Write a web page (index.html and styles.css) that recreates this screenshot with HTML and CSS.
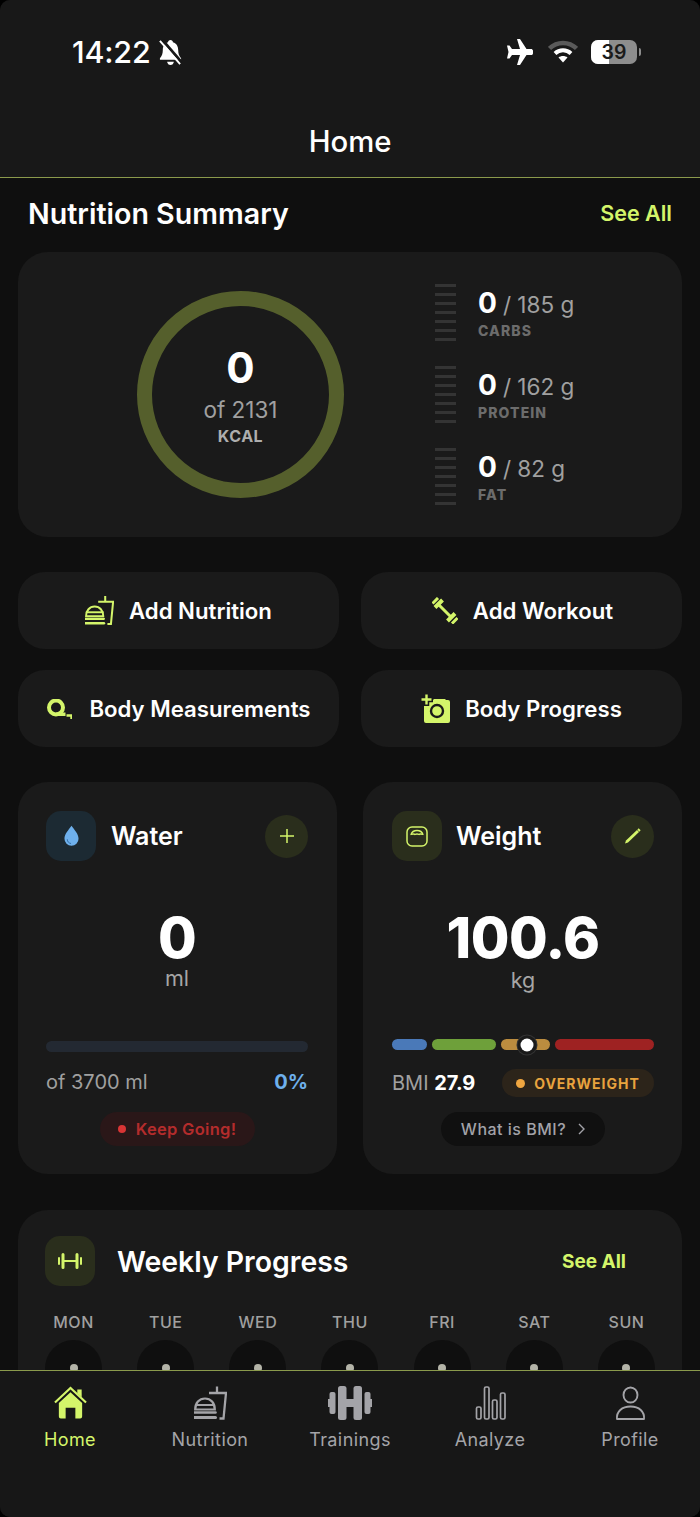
FILE: index.html
```html
<!DOCTYPE html>
<html lang="en">
<head>
<meta charset="utf-8">
<title>Home</title>
<link rel="stylesheet" href="styles.css">
</head>
<body>
<svg class="defs" aria-hidden="true">
  <symbol id="i-food" viewBox="0 0 33 33">
    <path d="M1.200 23c0-6.500 4-11 9.800-11s9.800 4.500 9.800 11z" fill="none" stroke="currentColor" stroke-width="2.200"/>
    <path d="M1 18.500h20" stroke="currentColor" stroke-width="2.200"/>
    <path d="M.5 26h21" stroke="currentColor" stroke-width="2.600" stroke-linecap="round"/>
    <path d="M.5 31h21" stroke="currentColor" stroke-width="3" stroke-linecap="round"/>
    <path d="M15 6.500h17L29.500 32H25.500M23 0v6.500" fill="none" stroke="currentColor" stroke-width="2.300"/>
  </symbol>
</svg>
<div class="frame">
  <header class="top">
    <div class="status">
      <div class="status-left">
        <span class="time">14:22</span>
        <svg class="bell" viewBox="0 0 26 28"><path d="M13 1c1.500 0 2.500 1 2.500 2.300 4 1.200 5.500 4.500 5.500 8.200 0 4 1 6 3 8.500v1.500H2V20c2-2.500 3-4.500 3-8.500 0-3.700 1.500-7 5.500-8.200C10.500 2 11.500 1 13 1z" fill="#fff"/><path d="M9.500 23.500h7c-.3 2-1.700 3.500-3.500 3.500s-3.200-1.500-3.500-3.500z" fill="#fff"/><path d="M4.500 1l20 23" stroke="#181818" stroke-width="3"/><path d="M2 2l21 24" stroke="#fff" stroke-width="2"/></svg>
      </div>
      <div class="status-right">
        <svg class="plane" viewBox="0 0 28 26"><path d="M12 0h3l6.500 10H26c1.500 0 2.200 1.300 2.200 3S27.500 16 26 16h-4.500L15 26h-3l3-10H7l-2.500 3.500H2L3.500 13 2 6.500h2.500L7 10h8z" fill="#fff"/></svg>
        <svg class="wifi" viewBox="0 0 30 24"><path d="M1.500 8.500C9 1 21 1 28.500 8.500" fill="none" stroke="#5a5a5a" stroke-width="4.500"/><path d="M7 13.500c4.500-4.300 11.500-4.300 16 0" fill="none" stroke="#fff" stroke-width="4"/><path d="M15 22.500l-4.500-5c2.500-2 6.500-2 9 0z" fill="#fff"/></svg>
        <div class="battery"><div class="battery-body"><span class="battery-level"></span><span class="battery-num">39</span></div><span class="battery-nub"></span></div>
      </div>
    </div>
    <h1 class="page-title">Home</h1>
  </header>

  <main class="content">
    <div class="section-head">
      <h2 class="section-title">Nutrition Summary</h2>
      <a class="see-all">See All</a>
    </div>

    <section class="card summary">
      <div class="ring">
        <span class="ring-value">0</span>
        <span class="ring-of">of 2131</span>
        <span class="ring-unit">KCAL</span>
      </div>
      <div class="macros">
        <div class="macro">
          <div class="ticks"><i></i><i></i><i></i><i></i><i></i><i></i><i></i></div>
          <div class="macro-text">
            <div class="macro-line"><b>0</b><span>/ 185 g</span></div>
            <div class="macro-label">CARBS</div>
          </div>
        </div>
        <div class="macro">
          <div class="ticks"><i></i><i></i><i></i><i></i><i></i><i></i><i></i></div>
          <div class="macro-text">
            <div class="macro-line"><b>0</b><span>/ 162 g</span></div>
            <div class="macro-label">PROTEIN</div>
          </div>
        </div>
        <div class="macro">
          <div class="ticks"><i></i><i></i><i></i><i></i><i></i><i></i><i></i></div>
          <div class="macro-text">
            <div class="macro-line"><b>0</b><span>/ 82 g</span></div>
            <div class="macro-label">FAT</div>
          </div>
        </div>
      </div>
    </section>

    <section class="actions">
      <a class="action">
        <svg class="ic-food"><use href="#i-food"/></svg>
        <span>Add Nutrition</span>
      </a>
      <a class="action">
        <svg class="ic-workout" viewBox="0 0 26 27"><path d="M6 7l14 14" stroke="currentColor" stroke-width="3"/><path d="M3 10.500L10.500 3M15.500 24L23 16.500" stroke="currentColor" stroke-width="4"/><path d="M.5 6.500L6 1M20 26.500L25.500 21" stroke="currentColor" stroke-width="3"/></svg>
        <span>Add Workout</span>
      </a>
      <a class="action">
        <svg class="ic-tape" viewBox="0 0 26 20"><circle cx="10" cy="8.500" r="7" fill="none" stroke="currentColor" stroke-width="4"/><path d="M10 13.500h9.500V17H10z" fill="currentColor"/><path d="M20.500 16.500h5V20" fill="none" stroke="currentColor" stroke-width="2.400"/></svg>
        <span>Body Measurements</span>
      </a>
      <a class="action">
        <svg class="ic-camera" viewBox="0 0 29 29"><path d="M5 6h7l1-1h11l1 1h2a2 2 0 0 1 2 2v19a2 2 0 0 1-2 2H5a2 2 0 0 1-2-2V8a2 2 0 0 1 2-2z" fill="currentColor"/><circle cx="16" cy="17" r="6" fill="none" stroke="#1a1a1a" stroke-width="2.400"/><path d="M5.500 0v12M0 5.500h12" stroke="#1a1a1a" stroke-width="5.500"/><path d="M5.500 .5v10M.5 5.500h10" stroke="currentColor" stroke-width="2.400"/></svg>
        <span>Body Progress</span>
      </a>
    </section>

    <section class="stats">
      <article class="card stat stat-water">
        <div class="stat-head">
          <div class="tile tile-blue">
            <svg class="ic-drop" viewBox="0 0 16 22"><path d="M8 0c3 4.500 7.500 8.500 7.500 14A7.500 7.500 0 0 1 .5 14C.5 8.500 5 4.500 8 0z" fill="#6eb0ec"/><path d="M3.500 14.500c0 2.500 1.700 4.200 4 4.500" fill="none" stroke="#2f6ba3" stroke-width="1"/></svg>
          </div>
          <h3 class="stat-title">Water</h3>
          <button class="round-btn" aria-label="Add water">
            <svg class="ic-plus" viewBox="0 0 14 14"><path d="M7 0v14M0 7h14" stroke="currentColor" stroke-width="1.500"/></svg>
          </button>
        </div>
        <div class="stat-value">0</div>
        <div class="stat-unit">ml</div>
        <div class="water-bar"></div>
        <div class="water-row">
          <span class="water-of">of 3700 ml</span>
          <span class="water-pct">0%</span>
        </div>
        <div class="stat-foot">
          <span class="pill-keep"><i class="dot dot-red"></i>Keep Going!</span>
        </div>
      </article>

      <article class="card stat stat-weight">
        <div class="stat-head">
          <div class="tile tile-green">
            <svg class="ic-scale" viewBox="0 0 22 21"><rect x="1" y="1" width="20" height="19" rx="5" fill="none" stroke="currentColor" stroke-width="1.500"/><path d="M5 8.500C6 5.500 8.500 4.500 11 4.500s5 1 6 4c-1.500-.5-3-1-4 0-1-.5-3-.5-4 0-1-1-2.500-.5-4 0z" fill="none" stroke="currentColor" stroke-width="1.300" stroke-linejoin="round"/></svg>
          </div>
          <h3 class="stat-title">Weight</h3>
          <button class="round-btn" aria-label="Edit weight">
            <svg class="ic-pen" viewBox="0 0 17 16"><path d="M1 15.500l1-3L13 2l2 2L4 14.500z" fill="currentColor"/><path d="M14 1l2 2" stroke="currentColor" stroke-width="1.800"/></svg>
          </button>
        </div>
        <div class="stat-value">100.6</div>
        <div class="stat-unit">kg</div>
        <div class="bmi-scale">
          <span class="seg seg-blue"></span>
          <span class="seg seg-green"></span>
          <span class="seg seg-tan"><i class="marker"></i></span>
          <span class="seg seg-red"></span>
        </div>
        <div class="bmi-row">
          <span class="bmi-text">BMI <b>27.9</b></span>
          <span class="pill-over"><i class="dot dot-orange"></i>OVERWEIGHT</span>
        </div>
        <div class="stat-foot">
          <a class="pill-what">What is BMI?
            <svg class="ic-chev" viewBox="0 0 7 12"><path d="M1 1l5 5-5 5" fill="none" stroke="currentColor" stroke-width="1.400"/></svg>
          </a>
        </div>
      </article>
    </section>

    <section class="card weekly">
      <div class="weekly-head">
        <div class="tile tile-green">
          <svg class="ic-bar" viewBox="0 0 24 16"><path d="M1 5v6M23 5v6" stroke="currentColor" stroke-width="2" stroke-linecap="round"/><path d="M5 1.500v13M19 1.500v13" stroke="currentColor" stroke-width="3" stroke-linecap="round"/><path d="M5 8h14" stroke="currentColor" stroke-width="2"/></svg>
        </div>
        <h2 class="weekly-title">Weekly Progress</h2>
        <a class="see-all see-all-small">See All</a>
      </div>
      <div class="days">
        <div class="day"><span>MON</span><div class="day-circle"><i></i></div></div>
        <div class="day"><span>TUE</span><div class="day-circle"><i></i></div></div>
        <div class="day"><span>WED</span><div class="day-circle"><i></i></div></div>
        <div class="day"><span>THU</span><div class="day-circle"><i></i></div></div>
        <div class="day"><span>FRI</span><div class="day-circle"><i></i></div></div>
        <div class="day"><span>SAT</span><div class="day-circle"><i></i></div></div>
        <div class="day"><span>SUN</span><div class="day-circle"><i></i></div></div>
      </div>
    </section>
  </main>

  <nav class="tabs">
    <a class="tab tab-active">
      <svg class="tab-ic" viewBox="0 0 34 34"><path d="M1 16.500L17 1.500 33 16.500" fill="none" stroke="currentColor" stroke-width="2.200"/><path d="M24 3h4.500v8L24 7z" fill="currentColor"/><path d="M17 6l12 11v14a2 2 0 0 1-2 2h-5V22h-10v11H7a2 2 0 0 1-2-2V17z" fill="currentColor"/></svg>
      <span>Home</span>
    </a>
    <a class="tab">
      <svg class="tab-ic"><use href="#i-food"/></svg>
      <span>Nutrition</span>
    </a>
    <a class="tab">
      <svg class="tab-ic tab-ic-wide" viewBox="0 0 44 34"><rect x="0" y="13" width="2" height="8" fill="currentColor"/><rect x="1.500" y="6" width="6" height="22" rx="2" fill="currentColor"/><rect x="10" y="0" width="8.500" height="34" rx="2.500" fill="currentColor"/><rect x="18" y="13" width="8" height="8" fill="currentColor"/><rect x="25.500" y="0" width="8.500" height="34" rx="2.500" fill="currentColor"/><rect x="36.500" y="6" width="6" height="22" rx="2" fill="currentColor"/><rect x="42" y="13" width="2" height="8" fill="currentColor"/></svg>
      <span>Trainings</span>
    </a>
    <a class="tab">
      <svg class="tab-ic" viewBox="0 0 30 34"><g fill="none" stroke="currentColor" stroke-width="1.700"><rect x="1" y="21" width="4.500" height="12" rx="1.500"/><rect x="9" y="1" width="4.500" height="32" rx="1.500"/><rect x="17" y="14" width="4.500" height="19" rx="1.500"/><rect x="25" y="7" width="4.500" height="26" rx="1.500"/></g></svg>
      <span>Analyze</span>
    </a>
    <a class="tab">
      <svg class="tab-ic" viewBox="0 0 30 34"><g fill="none" stroke="currentColor" stroke-width="1.900"><ellipse cx="15" cy="9" rx="7" ry="7.500"/><path d="M1.500 33c-.8-7.500 5-12.500 13.500-12.500S29.300 25.500 28.500 33z" stroke-linejoin="round"/></g></svg>
      <span>Profile</span>
    </a>
  </nav>
</div>
</body>
</html>
```
FILE: styles.css
```css
* { box-sizing: border-box; }
html, body { margin: 0; padding: 0; background: #000; }
body { font-family: Inter, "Noto Sans", sans-serif; color: #fff; width: 700px; height: 1517px; overflow: hidden; }
.defs { position: absolute; width: 0; height: 0; }
a { color: inherit; text-decoration: none; }
h1, h2, h3 { margin: 0; }
i { display: block; font-style: normal; }

.frame { width: 700px; height: 1517px; background: #0f0f0f; border-radius: 10px; overflow: hidden; display: flex; flex-direction: column; }

/* header */
.top { height: 178px; flex: none; background: #181818; border-bottom: 1px solid #8b9a4c; padding-top: 32px; }
.status { height: 40px; padding: 0 59px 0 72px; display: flex; justify-content: space-between; align-items: center; }
.status-left { display: flex; align-items: center; gap: 7px; }
.time { font-size: 30.500px; font-weight: 500; line-height: 40px; letter-spacing: -.2px; }
.bell { width: 25px; height: 27px; }
.status-right { display: flex; align-items: center; gap: 14px; }
.plane { width: 28px; height: 26px; margin-right: 1px; }
.wifi { width: 30px; height: 24px; }
.battery { display: flex; align-items: center; gap: 2px; margin-left: -1px; }
.battery-body { position: relative; width: 46px; height: 24px; border-radius: 7px; background: #8d8d8d; overflow: hidden; display: flex; align-items: center; justify-content: center; }
.battery-level { position: absolute; left: 0; top: 0; bottom: 0; width: 18px; background: #fff; }
.battery-num { position: relative; color: #1a1a1a; font-size: 19.500px; font-weight: 600; line-height: 24px; }
.battery-nub { width: 2px; height: 8px; background: #8d8d8d; border-radius: 0 2px 2px 0; }
.page-title { margin-top: 50px; text-align: center; font-size: 29.300px; font-weight: 500; line-height: 40px; }

/* content */
.content { flex: 1; min-height: 0; overflow: hidden; padding: 0 18px; }
.section-head { height: 74px; padding: 0 10px 4px; display: flex; justify-content: space-between; align-items: center; }
.section-title { font-size: 28.600px; font-weight: 600; }
.see-all { color: #d4f56a; font-size: 21.500px; font-weight: 600; }
.card { background: #1a1a1a; border-radius: 30px; }

.summary { height: 285px; padding-left: 119px; display: flex; align-items: center; gap: 91px; }
.ring { width: 207px; height: 207px; border: 15px solid #555f2c; border-radius: 50%; display: flex; flex-direction: column; align-items: center; }
.ring-value { margin-top: 37px; font-size: 42px; font-weight: 700; line-height: 50px; }
.ring-of { margin-top: 3px; font-size: 22.500px; color: #a0a0a0; line-height: 28px; }
.ring-unit { font-size: 16px; font-weight: 700; color: #aeaeae; line-height: 24px; letter-spacing: .5px; }
.macros { display: flex; flex-direction: column; gap: 25px; }
.macro { display: flex; gap: 22px; height: 57px; }
.ticks { width: 21px; display: flex; flex-direction: column; gap: 6px; }
.ticks i { height: 3px; background: #343434; }
.macro-line { display: flex; align-items: baseline; gap: 6px; line-height: 38px; height: 38px; }
.macro-line b { font-size: 28px; font-weight: 700; }
.macro-line span { font-size: 22.500px; color: #a0a0a0; }
.macro-label { font-size: 14px; font-weight: 800; color: #6c6c6c; letter-spacing: 1.100px; line-height: 16px; margin-top: 1px; }

.actions { margin-top: 35px; display: grid; grid-template-columns: 321px 321px; column-gap: 22px; row-gap: 21px; }
.action { height: 77px; border-radius: 27px; background: #1a1a1a; display: flex; align-items: center; justify-content: center; gap: 15px; font-size: 22.200px; font-weight: 600; }
.action svg { color: #d4f56a; flex: none; }
.ic-food { width: 29px; height: 29px; }
.ic-workout { width: 26px; height: 27px; margin-left: 2px; }
.ic-tape { width: 26px; height: 20px; margin-right: 2px; }
.ic-camera { width: 29px; height: 29px; }

.stats { margin-top: 35px; display: grid; grid-template-columns: 319px 319px; column-gap: 26px; }
.stat { height: 392px; padding-top: 29px; display: flex; flex-direction: column; }
.stat-water { padding-left: 28px; padding-right: 29px; }
.stat-weight { padding-left: 29px; padding-right: 28px; }
.stat-head { display: flex; align-items: center; height: 50px; }
.tile { width: 50px; height: 50px; border-radius: 15px; display: flex; align-items: center; justify-content: center; flex: none; }
.tile-blue { background: #1c2a33; }
.tile-green { background: #2a2e1c; color: #d4f56a; }
.ic-drop { width: 15px; height: 22px; }
.ic-scale { width: 22px; height: 21px; }
.stat-title { flex: 1; margin-left: 15px; font-size: 25px; font-weight: 600; }
.stat-weight .stat-title { margin-left: 14px; }
.round-btn { width: 43px; height: 43px; padding: 0; border: 0; border-radius: 50%; background: #2a2e1c; color: #d4f56a; display: flex; align-items: center; justify-content: center; }
.ic-plus { width: 14px; height: 14px; }
.ic-pen { width: 17px; height: 16px; }
.stat-value { margin-top: 49px; text-align: center; font-size: 56px; font-weight: 800; line-height: 56px; letter-spacing: -.5px; }
.stat-unit { text-align: center; font-size: 21.500px; color: #a6a6a6; line-height: 24px; }
.stat-weight .stat-unit { margin-top: 2px; }
.water-bar { margin-top: 51px; height: 11px; border-radius: 6px; background: #232932; }
.water-row { margin-top: 17px; display: flex; justify-content: space-between; font-size: 20px; line-height: 26px; }
.water-of { color: #a0a0a0; }
.water-pct { color: #6eb0ec; font-weight: 700; }
.stat-foot { margin-top: 17px; display: flex; justify-content: center; }
.stat-weight .stat-foot { margin-top: 15px; }
.dot { border-radius: 50%; flex: none; }
.dot-red { width: 8px; height: 8px; background: #d83535; }
.dot-orange { width: 9px; height: 9px; background: #f0a640; }
.pill-keep { height: 34px; width: 155px; border-radius: 17px; background: #2a1718; color: #b42c2c; font-size: 16.500px; font-weight: 600; letter-spacing: .3px; display: flex; align-items: center; justify-content: center; gap: 10px; }

.bmi-scale { margin-top: 47px; height: 11px; display: flex; gap: 5px; }
.seg { display: block; height: 11px; border-radius: 6px; position: relative; }
.seg-blue { width: 35px; background: #4a79b8; }
.seg-green { width: 64px; background: #6ea03a; }
.seg-tan { width: 49px; background: #bb8c3f; }
.seg-red { width: 99px; background: #9e2222; }
.marker { position: absolute; left: 26px; top: 5.500px; transform: translate(-50%, -50%); width: 13px; height: 13px; border-radius: 50%; background: #fff; box-shadow: 0 0 0 3px #1a1a1a, 0 0 0 4px #333; }
.bmi-row { margin-top: 19px; display: flex; justify-content: space-between; align-items: center; height: 28px; }
.bmi-text { font-size: 20px; color: #a0a0a0; }
.bmi-text b { color: #fff; font-weight: 700; }
.pill-over { width: 152px; height: 28px; border-radius: 14px; background: #2c241a; color: #e8a33e; font-size: 14px; font-weight: 700; letter-spacing: 1px; display: flex; align-items: center; justify-content: center; gap: 9px; }
.pill-what { width: 164px; height: 34px; border-radius: 17px; background: #101010; color: #a2a2a8; font-size: 16px; font-weight: 500; letter-spacing: .5px; display: flex; align-items: center; justify-content: center; gap: 12px; }
.ic-chev { width: 7px; height: 12px; }

.weekly { margin-top: 36px; padding: 26px 27px 40px; }
.weekly-head { display: flex; align-items: center; height: 50px; }
.weekly-title { flex: 1; margin-left: 22px; font-size: 28.400px; font-weight: 600; }
.ic-bar { width: 24px; height: 16px; }
.see-all-small { font-size: 19px; margin-right: 29px; font-weight: 700; }
.days { margin-top: 26px; display: flex; justify-content: space-between; }
.day { width: 57px; display: flex; flex-direction: column; align-items: center; font-size: 16px; font-weight: 500; color: #a0a0a0; letter-spacing: .5px; }
.day span { line-height: 20px; }
.day-circle { margin-top: 8px; width: 57px; height: 57px; border-radius: 50%; background: #0f0f0f; display: flex; align-items: center; justify-content: center; }
.day-circle i { width: 8px; height: 8px; border-radius: 50%; background: #b4b4a8; margin-bottom: 2px; }

/* tab bar */
.tabs { height: 147px; flex: none; background: #171717; border-top: 1px solid #8b9a4c; padding-top: 15px; display: grid; grid-template-columns: repeat(5, 1fr); }
.tab { display: flex; flex-direction: column; align-items: center; color: #a4a4a8; font-size: 18px; letter-spacing: .4px; }
.tab-active { color: #d4f56a; }
.tab-ic { width: 33px; height: 34px; }
.tab-ic-wide { width: 44px; }
.tab span { margin-top: 8px; line-height: 24px; }
```
